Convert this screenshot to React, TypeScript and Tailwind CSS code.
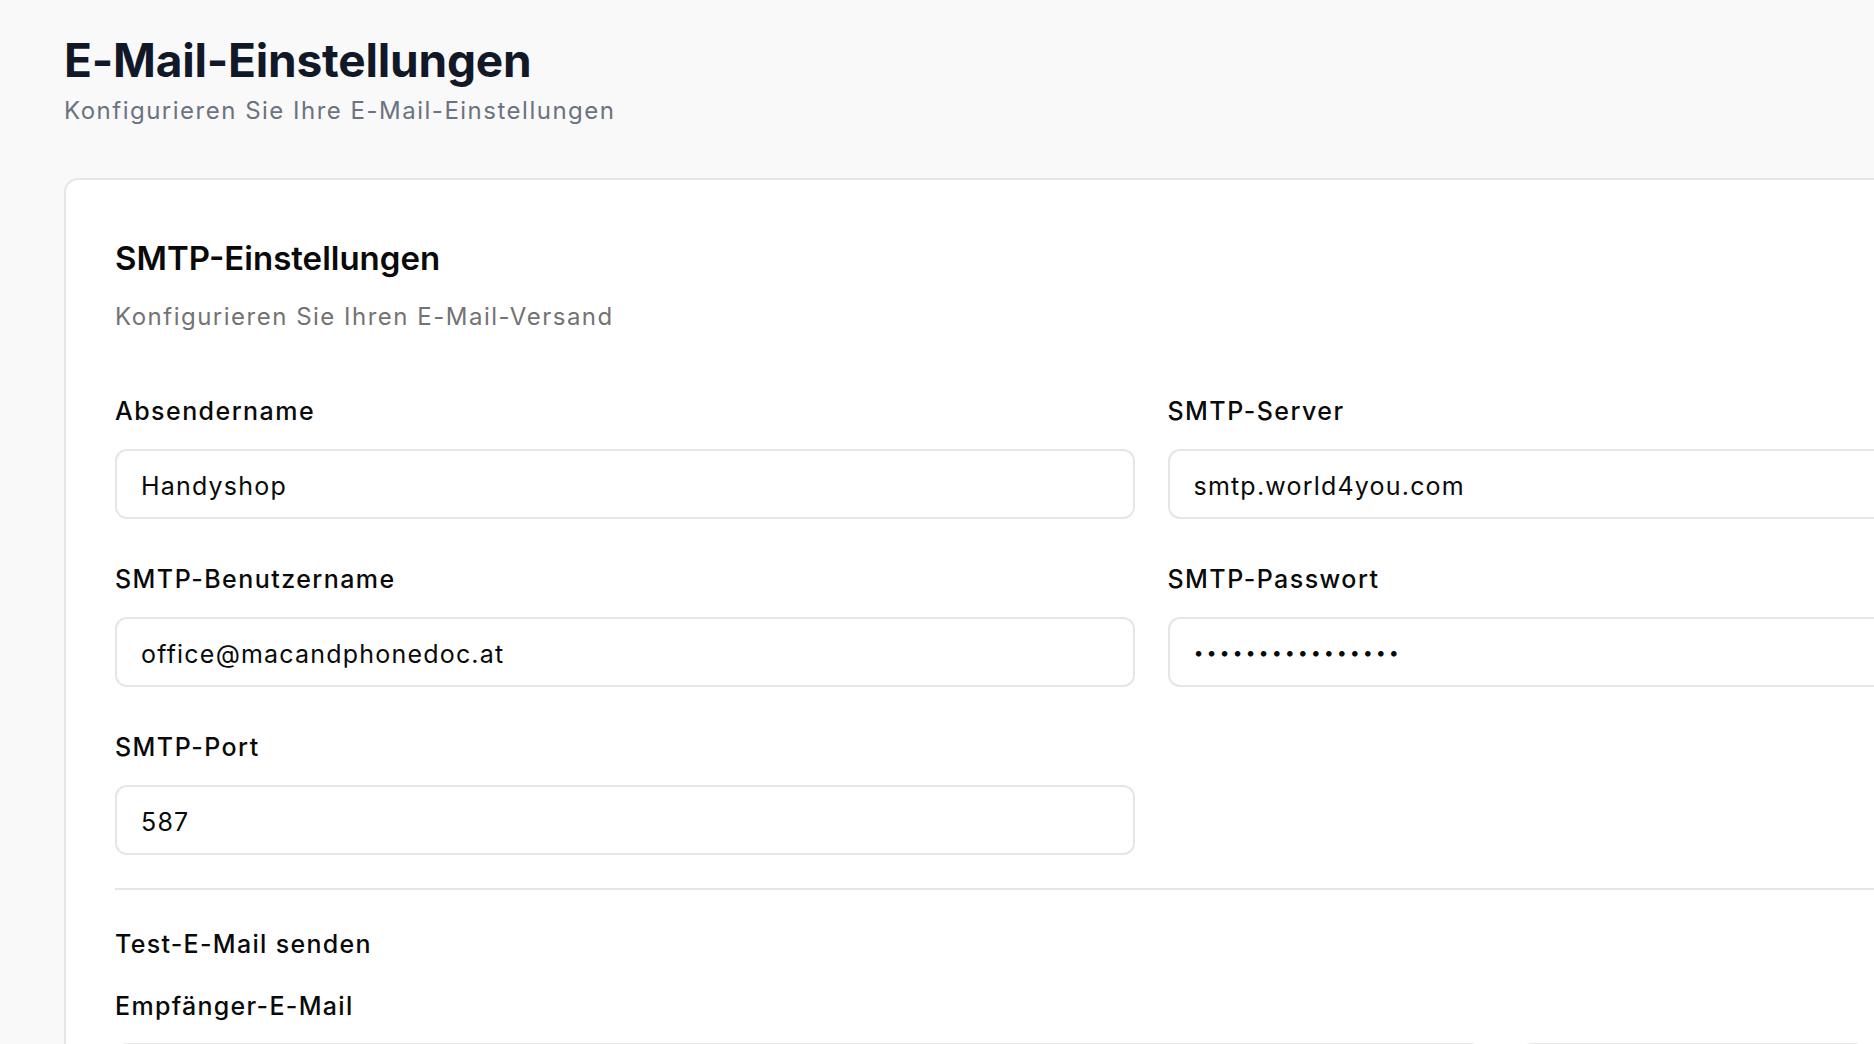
import React from "react";

const font = { fontFamily: "Inter, 'Noto Sans', sans-serif" };

function Field({ label, value, type = "text" }: { label: string; value: string; type?: string }) {
  const isPw = type === "password";
  return (
    <div className="flex flex-col">
      <label className="text-[25px] leading-[36px] font-medium tracking-[1.45px] text-[#0a0a0a]">{label}</label>
      <input
        readOnly
        type={type}
        value={value}
        className={
          isPw
            ? "mt-[20px] h-[70px] w-full rounded-[12px] border-2 border-[#e6e6e6] bg-white px-[24px] text-[18px] tracking-[2.9px] text-[#0a0a0a] outline-none"
            : "mt-[20px] h-[70px] w-full rounded-[12px] border-2 border-[#e6e6e6] bg-white px-[24px] pt-[3px] text-[25px] tracking-[1.2px] text-[#0a0a0a] outline-none"
        }
      />
    </div>
  );
}

export default function App() {
  return (
    <div className="h-[1044px] w-full overflow-hidden bg-[#f9f9f9]" style={font}>
      <div className="pl-[64px] pt-[33px]">
        <h1 className="text-[46px] leading-[55px] font-bold tracking-[-0.2px] text-[#111827]">E-Mail-Einstellungen</h1>
        <p className="mt-[5px] text-[24px] leading-[36px] tracking-[1.5px] text-[#6b7280]">
          Konfigurieren Sie Ihre E-Mail-Einstellungen
        </p>

        <div className="mt-[49px] w-[2174px] rounded-[14px] border-2 border-[#e6e6e6] bg-white px-[49px] pt-[58px] pb-[60px]">
          <h2 className="text-[33px] leading-[40px] font-semibold text-[#0a0a0a]">SMTP-Einstellungen</h2>
          <p className="mt-[21px] text-[24px] leading-[36px] tracking-[1.5px] text-[#737373]">
            Konfigurieren Sie Ihren E-Mail-Versand
          </p>

          <div className="mt-[58px] grid grid-cols-2 gap-x-[33px] gap-y-[42px]">
            <Field label="Absendername" value="Handyshop" />
            <Field label="SMTP-Server" value="smtp.world4you.com" />
            <Field label="SMTP-Benutzername" value="office@macandphonedoc.at" />
            <Field label="SMTP-Passwort" value="0123456789abcdef" type="password" />
            <Field label="SMTP-Port" value="587" />
          </div>

          <div className="mt-[33px] h-[2px] w-full bg-[#e6e6e6]" />

          <div className="mt-[36px] text-[25px] leading-[36px] font-medium tracking-[1.3px] text-[#0a0a0a]">
            Test-E-Mail senden
          </div>
          <div className="mt-[26px] text-[25px] leading-[36px] font-medium tracking-[1.3px] text-[#0a0a0a]">
            Empfänger-E-Mail
          </div>
          <div className="mt-[19px] flex w-[1751px] gap-[38px]">
            <input
              readOnly
              type="email"
              value=""
              className="h-[70px] flex-1 rounded-[12px] border-2 border-[#e6e6e6] bg-white px-[24px] text-[25px] outline-none"
            />
            <button className="h-[70px] w-[346px] rounded-[12px] border-2 border-[#e6e6e6] bg-white text-[25px] font-medium text-[#0a0a0a]">
              Senden
            </button>
          </div>
        </div>
      </div>
    </div>
  );
}
